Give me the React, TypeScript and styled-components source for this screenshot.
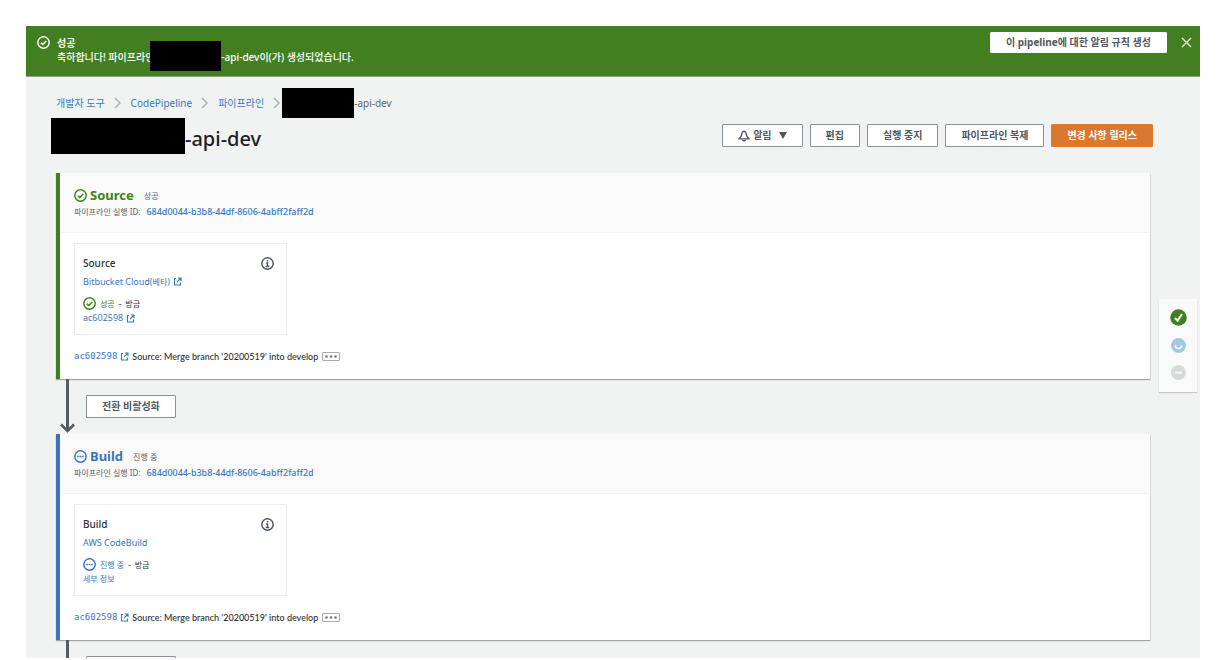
import React from "react";
import styled, { createGlobalStyle } from "styled-components";

const color = {
  green: "#417f21",
  heading: "#3b8416",
  blue: "#3d74b8",
  link: "#3978bd",
  text: "#2b3036",
  muted: "#5d646b",
  button: "#4f5761",
  page: "#f1f3f3",
  line: "#eaeded",
};

const GlobalStyle = createGlobalStyle`
  * { box-sizing: border-box; }
  html, body { margin: 0; background: #fff; }
  body {
    font-family: "Noto Sans", "Noto Sans CJK KR", sans-serif;
    font-size: 10px;
    font-weight: 500;
    line-height: 15px;
    color: ${color.text};
    overflow: hidden;
  }
  h1, h2, h3, p, ol { margin: 0; padding: 0; font-weight: 500; }
  button { font-family: inherit; cursor: pointer; }
  svg { display: block; flex: none; }
`;

const Frame = styled.div`
  margin: 26px 28px 2px 26px;
  height: calc(100vh - 28px);
  overflow: hidden;
  background: ${color.page};
`;

const Banner = styled.div`
  display: flex;
  align-items: flex-start;
  height: 51px;
  padding: 6px 8px 0 11px;
  background: ${color.green};
  border-bottom: 1px solid #8fa08a;
  color: #fff;
`;

const BannerIcon = styled.div`
  padding-top: 4px;
  margin-right: 7px;
`;

const BannerText = styled.div`
  flex: 1;
  padding-top: 4px;
`;

const BannerTitle = styled.p`
  font-weight: 700;
  line-height: 14px;
`;

const TextLine = styled.p`
  display: flex;
  align-items: center;
  height: 15px;
  white-space: nowrap;
`;

const Redacted = styled.span<{ $width: number; $height?: number }>`
  flex: none;
  width: ${(p) => p.$width}px;
  height: ${(p) => p.$height ?? 30}px;
  background: #000;
  ${TextLine} & { margin: 0 0 4px -4px; }
`;

const Button = styled.button<{ $primary?: boolean; $plain?: boolean }>`
  display: inline-flex;
  align-items: center;
  justify-content: center;
  height: ${(p) => (p.$plain ? 21 : 23)}px;
  padding: 0 15px;
  border: 1px solid ${(p) => (p.$primary ? "#dd7a33" : p.$plain ? "#fff" : "#8b9198")};
  border-radius: 1px;
  background: ${(p) => (p.$primary ? "#dc7730" : "#fff")};
  color: ${(p) => (p.$primary ? "#fff" : color.button)};
  font-size: 10px;
  font-weight: 700;
  line-height: 15px;
  white-space: nowrap;
`;

const CloseButton = styled.button`
  display: flex;
  margin: 5px 0 0 14px;
  padding: 0;
  border: 0;
  background: none;
  color: #e5eee0;
`;

const Breadcrumb = styled.nav`
  display: flex;
  align-items: center;
  height: 30px;
  margin: 11px 30px 0;
  color: ${color.muted};
  font-weight: 400;
  white-space: nowrap;
`;

const Link = styled.a<{ $mono?: boolean }>`
  display: inline-flex;
  align-items: center;
  gap: 3px;
  color: ${color.link};
  text-decoration: none;
  ${(p) => p.$mono && `font-family: "DejaVu Sans Mono", monospace;`}
`;

const Crumb = styled.span`
  display: flex;
  align-items: center;
  svg { margin: 0 10px 0 9px; }
  &:nth-child(3) svg { margin-right: 2px; }
`;

const Header = styled.header`
  display: flex;
  justify-content: space-between;
  align-items: flex-start;
  height: 55px;
  padding: 0 47px 0 25px;
`;

const Title = styled.h1`
  display: flex;
  align-items: flex-start;
  font-size: 20px;
  line-height: 42px;
  color: #1c2026;
  white-space: nowrap;
`;

const Toolbar = styled.div`
  display: flex;
  gap: 7px;
  padding-top: 6px;
`;

const NotifyContent = styled.span`
  display: flex;
  align-items: center;
  svg + span { margin: 0 7px 0 3px; }
`;

const Body = styled.main`
  display: flex;
  align-items: flex-start;
  padding: 0 3px 0 30px;
`;

const Stages = styled.div`
  flex: 1;
  min-width: 0;
`;

const StageCard = styled.section<{ $tone: string }>`
  height: 206px;
  border-left: 4px solid ${(p) => p.$tone};
  background: #fff;
  box-shadow: 0 1px 1px #9fa6a8, 1px 1px 1px #dfe3e3;
`;

const StageHead = styled.div`
  height: 60px;
  padding: 14px 14px 0;
  background: #fafafa;
  border-bottom: 1px solid #f1f3f3;
`;

const StageTitle = styled.h2<{ $tone: string }>`
  display: flex;
  align-items: center;
  gap: 3px;
  height: 17px;
  font-size: 13px;
  font-weight: 700;
  color: ${(p) => p.$tone};
`;

const StageState = styled.span`
  margin-left: 7px;
  font-size: 8px;
  font-weight: 400;
  color: ${color.muted};
`;

const ExecutionId = styled.p`
  display: flex;
  gap: 6px;
  font-size: 9px;
  font-weight: 400;
  line-height: 16px;
  color: ${color.muted};
  white-space: nowrap;
  a { font-weight: 500; }
`;

const Small = styled.span`
  font-size: 8px;
`;

const ActionCard = styled.article`
  width: 213px;
  height: 92px;
  margin: 10px 14px 0;
  padding: 9px 12px 0 8px;
  border: 1px solid ${color.line};
  font-size: 9px;
`;

const ActionTop = styled.div`
  display: flex;
  align-items: center;
  justify-content: space-between;
  height: 20px;
`;

const ActionName = styled.h3`
  font-size: 10px;
`;

const IconButton = styled.button`
  display: flex;
  padding: 0;
  border: 0;
  background: none;
  color: ${color.button};
`;

const ActionRow = styled.p`
  display: flex;
  align-items: center;
  height: 17px;
  font-weight: 400;
`;

const ActionStatus = styled.p<{ $tone: string }>`
  display: flex;
  align-items: center;
  gap: 4px;
  height: 15px;
  margin-top: 6px;
  font-size: 8px;
  font-weight: 400;
  strong { font-weight: 400; color: ${(p) => p.$tone}; }
  svg { color: ${(p) => p.$tone}; }
`;

const ActionLink = styled.p`
  display: flex;
  font-weight: 400;
  line-height: 14px;
`;

const Commit = styled.p`
  display: flex;
  align-items: center;
  gap: 3px;
  height: 15px;
  margin: 14px 14px 0;
  font-family: Lato, sans-serif;
  font-size: 9px;
  white-space: nowrap;
`;

const MoreButton = styled.button`
  display: flex;
  align-items: center;
  justify-content: center;
  width: 18px;
  height: 9px;
  margin-left: 1px;
  padding: 0;
  border: 1px solid #a5abae;
  border-radius: 1px;
  background: #fff;
  color: #70777c;
`;

const Transition = styled.div`
  display: flex;
  align-items: flex-start;
  height: 55px;
  padding-left: 4px;
  button { margin: 16px 0 0 11px; }
`;

const StatusRail = styled.aside`
  display: flex;
  flex-direction: column;
  align-items: center;
  gap: 12px;
  width: 38px;
  height: 93px;
  margin: 126px 0 0 9px;
  padding-top: 10px;
  background: #fafafa;
  box-shadow: 0 1px 1px #c4c9c9;
`;

const Ring = ({ kind, size = 13 }: { kind: "check" | "dots" | "info"; size?: number }) => (
  <svg width={size} height={size} viewBox="0 0 16 16" fill="none" stroke="currentColor" strokeWidth="1.8">
    <circle cx="8" cy="8" r="7" />
    {kind === "check" && <path d="M4.7 8.2l2.4 2.3 4.3-4.4" />}
    {kind === "dots" && <path d="M4 8h2M7 8h2M10 8h2" />}
    {kind === "info" && <path d="M8 3.6v2M6.3 7.4H8v3.8M5.8 11.6h4.4" />}
  </svg>
);

const Chevron = () => (
  <svg width="7" height="12" viewBox="0 0 7 12" fill="none" stroke="#aab4b6" strokeWidth="1.5">
    <path d="M1 1l5 5-5 5" />
  </svg>
);

const External = () => (
  <svg width="9" height="9" viewBox="0 0 9 9" fill="none" stroke="currentColor" strokeWidth="1.1">
    <path d="M3 1.500H1.500v6.500h6V5.500M5 1h3v3M7.800 1.200L4 5" />
  </svg>
);

const Close = () => (
  <svg width="11" height="11" viewBox="0 0 11 11" fill="none" stroke="currentColor" strokeWidth="1.4">
    <path d="M1 1l9 9M10 1l-9 9" />
  </svg>
);

const Bell = () => (
  <svg width="12" height="12" viewBox="0 0 16 16" fill="none" stroke="currentColor" strokeWidth="1.8" strokeLinejoin="round">
    <path d="M8 1.5C5.5 2 5 4 4.7 6.5 4.4 9 3 10 1.2 11.8h13.6C13 10 11.600 9 11.300 6.500 11 4 10.500 2 8 1.500z" />
    <path d="M6 13.2c.3 1.700 3.700 1.700 4 0" />
  </svg>
);

const Caret = () => (
  <svg width="8" height="7" viewBox="0 0 8 7" fill="currentColor">
    <path d="M0 0h8L4 7z" />
  </svg>
);

const Dots = () => (
  <svg width="14" height="3" viewBox="0 0 14 3" fill="currentColor">
    <circle cx="2.500" cy="1.500" r="1.300" />
    <circle cx="7" cy="1.500" r="1.300" />
    <circle cx="11.500" cy="1.500" r="1.300" />
  </svg>
);

const Arrow = () => (
  <svg width="15" height="55" viewBox="0 0 15 55" fill="none" stroke="#545b64">
    <path d="M7.500 0v52" strokeWidth="3" />
    <path d="M1 45.500l6.500 6.500L14 45.500" strokeWidth="2.600" />
  </svg>
);

const RailDone = () => (
  <svg width="17" height="17" viewBox="0 0 17 17" fill="none" stroke="#fff">
    <circle cx="8.500" cy="8.500" r="8.300" fill="#417f21" stroke="none" />
    <path d="M5 9l2.600 2.600L12 5" strokeWidth="2" />
  </svg>
);

const RailActive = () => (
  <svg width="15" height="15" viewBox="0 0 15 15" fill="none" stroke="#fff">
    <circle cx="7.500" cy="7.500" r="7.500" fill="#a3cae2" stroke="none" />
    <path d="M4.300 7.500c.5 4 5.900 4 6.400 0" strokeWidth="1.600" />
  </svg>
);

const RailIdle = () => (
  <svg width="15" height="15" viewBox="0 0 15 15" fill="none" stroke="#f8f9f9">
    <circle cx="7.500" cy="7.500" r="7.500" fill="#d5dbdb" stroke="none" />
    <path d="M4 7.500h7" strokeWidth="1.800" />
  </svg>
);

type StageProps = {
  name: string;
  state: string;
  kind: "check" | "dots";
  tone: string;
  provider: React.ReactNode;
  detail: React.ReactNode;
};

const Stage = ({ name, state, kind, tone, provider, detail }: StageProps) => (
  <StageCard $tone={tone === color.heading ? color.green : tone}>
    <StageHead>
      <StageTitle $tone={tone}>
        <Ring kind={kind} />
        {name}
        <StageState>{state}</StageState>
      </StageTitle>
      <ExecutionId>
        <Small>파이프라인 실행 ID:</Small>
        <Link href="#execution">684d0044-b3b8-44df-8606-4abff2faff2d</Link>
      </ExecutionId>
    </StageHead>
    <ActionCard>
      <ActionTop>
        <ActionName>{name}</ActionName>
        <IconButton aria-label={`${name} 정보`}>
          <Ring kind="info" />
        </IconButton>
      </ActionTop>
      <ActionRow>{provider}</ActionRow>
      <ActionStatus $tone={tone}>
        <Ring kind={kind} />
        <strong>{state}</strong> - <span>방금</span>
      </ActionStatus>
      <ActionLink>{detail}</ActionLink>
    </ActionCard>
    <Commit>
      <Link href="#commit" $mono>
        ac602598 <External />
      </Link>
      <span>Source: Merge branch '20200519' into develop</span>
      <MoreButton aria-label="더 보기">
        <Dots />
      </MoreButton>
    </Commit>
  </StageCard>
);

const StageTransition = () => (
  <Transition>
    <Arrow />
    <Button>전환 비활성화</Button>
  </Transition>
);

export default function App() {
  return (
    <>
      <GlobalStyle />
      <Frame>
        <Banner role="status">
          <BannerIcon>
            <Ring kind="check" />
          </BannerIcon>
          <BannerText>
            <BannerTitle>성공</BannerTitle>
            <TextLine>
              축하합니다! 파이프라인
              <Redacted $width={71} />
              -api-dev이(가) 생성되었습니다.
            </TextLine>
          </BannerText>
          <Button $plain>이 pipeline에 대한 알림 규칙 생성</Button>
          <CloseButton aria-label="닫기">
            <Close />
          </CloseButton>
        </Banner>
        <Breadcrumb>
          <Crumb>
            <Link href="#tools">개발자 도구</Link>
            <Chevron />
          </Crumb>
          <Crumb>
            <Link href="#codepipeline">CodePipeline</Link>
            <Chevron />
          </Crumb>
          <Crumb>
            <Link href="#pipelines">파이프라인</Link>
            <Chevron />
          </Crumb>
          <Redacted $width={72} />
          <span>-api-dev</span>
        </Breadcrumb>
        <Header>
          <Title>
            <Redacted $width={134} $height={36} />
            <span>-api-dev</span>
          </Title>
          <Toolbar>
            <Button>
              <NotifyContent>
                <Bell />
                <span>알림</span>
                <Caret />
              </NotifyContent>
            </Button>
            <Button>편집</Button>
            <Button>실행 중지</Button>
            <Button>파이프라인 복제</Button>
            <Button $primary>변경 사항 릴리스</Button>
          </Toolbar>
        </Header>
        <Body>
          <Stages>
            <Stage
              name="Source"
              state="성공"
              kind="check"
              tone={color.heading}
              provider={
                <Link href="#bitbucket">
                  <span>
                    Bitbucket Cloud(<Small>베타</Small>)
                  </span>
                  <External />
                </Link>
              }
              detail={
                <Link href="#commit">
                  ac602598 <External />
                </Link>
              }
            />
            <StageTransition />
            <Stage
              name="Build"
              state="진행 중"
              kind="dots"
              tone={color.blue}
              provider={<Link href="#codebuild">AWS CodeBuild</Link>}
              detail={
                <Link href="#details">
                  <Small>세부 정보</Small>
                </Link>
              }
            />
            <StageTransition />
          </Stages>
          <StatusRail aria-label="단계 상태">
            <RailDone />
            <RailActive />
            <RailIdle />
          </StatusRail>
        </Body>
      </Frame>
    </>
  );
}
